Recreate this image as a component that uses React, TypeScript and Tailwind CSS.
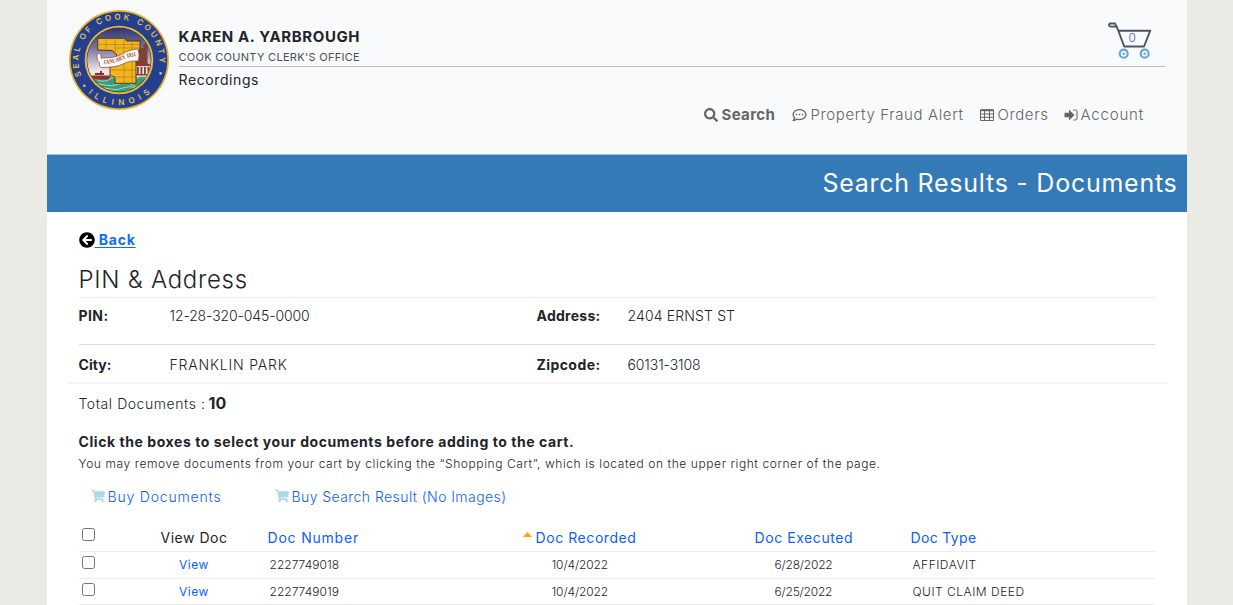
import { FaArrowCircleLeft, FaRegCommentDots, FaSearch, FaShoppingCart } from "react-icons/fa";

function Seal() {
  return (
    <svg viewBox="0 0 100 100" className="h-[100px] w-[100px] shrink-0">
      <defs>
        <linearGradient id="sky" x1="0" y1="0" x2="0" y2="1">
          <stop offset="0" stopColor="#2c3270" />
          <stop offset="0.4" stopColor="#77759f" />
          <stop offset="0.85" stopColor="#f3e6e4" />
        </linearGradient>
        <clipPath id="scene">
          <circle cx="50" cy="50" r="31.8" />
        </clipPath>
        <path id="arcTop" d="M19.9 77.1 A40.5 40.5 0 1 1 84.5 71.2" />
        <path id="arcBottom" d="M11.5 73.7 A45.2 45.2 0 0 0 88.5 73.7" />
        <path id="ribbon" d="M34.5 54.300C42 53.500 48 52.500 54 49.500C59 47 63 46.500 68.500 45.800" />
      </defs>
      <circle cx="50" cy="50" r="50" fill="#e9b526" />
      <circle cx="50" cy="50" r="48.3" fill="#233f8f" />
      <circle cx="50" cy="50" r="34.3" fill="#f0bb2b" />
      <circle cx="50" cy="50" r="32.4" fill="#273571" />
      <g clipPath="url(#scene)">
        <rect x="17" y="17" width="66" height="52" fill="url(#sky)" />
        <path d="M58 54V38h3v-5h4v2h2v-5h2v-3h1v3h1.500v8h3v-4h4v20z" fill="#7c4438" />
        <path d="M67 54.500l7-3.500 7 3.500v1.500H67zM68 57h1.800v7H68zM71.500 57h1.800v7h-1.800zM75 57h1.800v7H75zM78.500 57h1.800v7h-1.800zM67 64h15v1.500H67z" fill="#8b3c30" />
        <rect x="17" y="67" width="66" height="17" fill="#3f9b78" />
        <path d="M17 70q6-3 12 0t12-1 13 1 13-1 16 1M22 75q7-2 14 0t14-1 13 1 16-1M29 79q7-2 13 0t12-1 14 0" stroke="#a5d8b4" strokeWidth="1" fill="none" />
        <path d="M20 65.500h22l-3 4H22zM26 63h9v2h-9zM31 61h2v2h-2z" fill="#8f302b" />
      </g>
      <path
        d="M28.700 28.300H56l1.500 2.700H71v7.500L67 45v28.300H46V67l-5-1.500V52l7-7-5-4.500-14.300-.5z"
        fill="#f2b41f"
        stroke="#4e3c1c"
        strokeWidth="1"
      />
      <path d="M37 28.300V40M46 28.300V43M55 28.300V73M29 34.500h42M63 31v42M46 38h24M42 60h25M46 67h21" stroke="#a87718" strokeWidth="0.600" fill="none" />
      <path
        d="M28.300 44c3.500-1.500 4 1 3.700 4C42 48 48 47 54 43.500c5-3 9-3.800 14-4.500 2.500 1 2.500 9 1 12-6-.3-10 .5-15 3-6 3-13 3.300-20 3.500-3 .5-4-2.500-3.500-5-2 0-3-5-2.200-8.500z"
        fill="#fffaf0"
        stroke="#6e4544"
        strokeWidth="0.700"
      />
      <text className="font-['Liberation_Serif',serif] text-[6px] font-bold" fill="#963a33">
        <textPath href="#ribbon" textLength="34" lengthAdjust="spacingAndGlyphs">JANUARY 1831</textPath>
      </text>
      <text className="font-['Inter',sans-serif] text-[8px] font-semibold" fill="#edc04b">
        <textPath href="#arcTop" textLength="169" startOffset="2">• SEAL OF COOK COUNTY •</textPath>
      </text>
      <text className="font-['Inter',sans-serif] text-[8px] font-semibold" fill="#edc04b">
        <textPath href="#arcBottom" textLength="68" startOffset="12">ILLINOIS</textPath>
      </text>
    </svg>
  );
}

function Cart() {
  return (
    <svg viewBox="0 0 46 38" className="h-[38px] w-[46px]" fill="none">
      <path d="M9 4 11.300 9.700 17.200 25.500H37L43.300 9.700H11.300" stroke="#4a5664" strokeWidth="1.900" strokeLinejoin="round" />
      <path d="M3 2.500H8L9.300 5.700H4.300Q2 5.500 2 4Q2 2.500 3 2.500Z" stroke="#4a5664" strokeWidth="1.800" />
      <circle cx="16.700" cy="32.700" r="4" stroke="#64a9d8" strokeWidth="2.200" />
      <circle cx="37.700" cy="32.700" r="4" stroke="#64a9d8" strokeWidth="2.200" />
      <circle cx="16.700" cy="32.700" r="1.200" fill="#64a9d8" />
      <circle cx="37.700" cy="32.700" r="1.200" fill="#64a9d8" />
    </svg>
  );
}

function TableIcon() {
  return (
    <svg viewBox="0 0 14 12" className="h-3 w-3.5" fill="none" stroke="#666663">
      <path d="M0.500 1H13.500V11.500H0.500ZM4.500 1V11.500M9.500 1V11.500M0.500 5H13.500M0.500 8.300H13.500" />
      <path d="M0.500 1.200H13.500" strokeWidth="2" />
    </svg>
  );
}

function SignIn() {
  return (
    <svg viewBox="0 0 14 12" className="h-3 w-3.5">
      <path d="M0.500 3.700H5V0.500L10.500 6 5 11.500V8.300H0.500Z" fill="#666663" />
      <path d="M9 1H11.200Q13 1 13 2.800V9.200Q13 11 11.200 11H9" fill="none" stroke="#777" strokeWidth="1.200" />
    </svg>
  );
}

function Check() {
  return <input type="checkbox" className="block h-[13px] w-[13px]" />;
}

const rows = [
  { number: "2227749018", recorded: "10/4/2022", executed: "6/28/2022", type: "AFFIDAVIT" },
  { number: "2227749019", recorded: "10/4/2022", executed: "6/25/2022", type: "QUIT CLAIM DEED" },
];

export default function App() {
  return (
    <div className="h-[605px] overflow-hidden bg-[#ebebe6] pl-[46.5px] font-['Inter',sans-serif] text-[#212529]">
      <div className="h-[605px] w-[1140px] bg-white">
        <header className="h-[154px] bg-[#f8fafc] pl-[22px]">
          <div className="flex h-[100px] pt-[10px]">
            <Seal />
            <div className="ml-[10px] w-[986px]">
              <div className="flex h-[57px] justify-between border-b border-[#bcbdbf]">
                <div className="pt-[17px]">
                  <div className="h-5 text-[15px] leading-5 font-bold tracking-[0.6px]">KAREN A. YARBROUGH</div>
                  <div className="h-5 text-[11px] leading-5 tracking-[0.29px] text-[#4b5055]">COOK COUNTY CLERK'S OFFICE</div>
                </div>
                <div className="relative mt-[11px] mr-[12px] h-[38px] w-[46px]">
                  <Cart />
                  <span className="absolute top-[9px] left-[22px] text-[12px] leading-4 font-light text-[#5d48f5]">0</span>
                </div>
              </div>
              <div className="pt-[3px] text-[14px] leading-5 tracking-[0.6px]">Recordings</div>
            </div>
          </div>
          <nav className="flex h-[30px] items-center pl-[635px] text-[15px] font-light text-[#666663]">
            <div className="flex w-[88px] items-center font-bold tracking-[0.35px]">
              <FaSearch className="mr-1 h-3.5 w-3.5" />
              Search
            </div>
            <div className="flex w-[188px] items-center tracking-[0.62px]">
              <FaRegCommentDots className="mr-1 h-3.5 w-[15px]" />
              Property Fraud Alert
            </div>
            <div className="flex w-[84px] items-center tracking-[0.6px]">
              <span className="mr-1"><TableIcon /></span>
              Orders
            </div>
            <div className="flex items-center tracking-[0.8px]">
              <span className="mr-[3px]"><SignIn /></span>
              Account
            </div>
          </nav>
        </header>
        <div className="flex h-[58px] items-center justify-end border-t border-[#9fc0dc] bg-[#337ab7] pr-[9px] text-[25px] tracking-[0.74px] text-white">
          Search Results - Documents
        </div>

        <main className="px-8">
          <a href="#" className="mt-[18px] flex h-5 items-center text-[14px] font-bold tracking-[0.81px] text-[#0d6efd]">
            <FaArrowCircleLeft className="h-4 w-4 text-black" />
            <span className="relative -top-px whitespace-pre underline underline-offset-2"> Back</span>
          </a>
          <h1 className="mt-[14px] h-[34px] border-b border-[#ededed] text-[24px] leading-8 font-light tracking-[0.72px]">PIN &amp; Address</h1>
          <div className="grid h-[47px] w-[1076px] grid-cols-[91px_367px_91px_auto] border-b border-[#dcdddd] pt-[8px] text-[14px] leading-5">
            <b className="tracking-[0.41px]">PIN:</b>
            <span className="font-light tracking-[-0.11px]">12-28-320-045-0000</span>
            <b className="tracking-[0.27px]">Address:</b>
            <span className="font-light tracking-[0.14px]">2404 ERNST ST</span>
          </div>
          <div className="-mx-3 grid h-[39px] grid-cols-[91px_367px_91px_auto] border-b-2 border-[#f4f4f4] px-3 pt-[10px] text-[14px] leading-5">
            <b className="tracking-[0.06px]">City:</b>
            <span className="font-light tracking-[0.82px]">FRANKLIN PARK</span>
            <b className="tracking-[0.43px]">Zipcode:</b>
            <span className="font-light tracking-[-0.1px]">60131-3108</span>
          </div>
          <div className="mt-[9px] flex h-5 items-center text-[14px]">
            <span className="w-[130px] font-light tracking-[0.56px]">Total Documents :</span>
            <b className="text-[16px]">10</b>
          </div>
          <div className="mt-[19px] text-[14px] leading-5 font-bold tracking-[0.57px]">Click the boxes to select your documents before adding to the cart.</div>
          <div className="mt-[2px] text-[12px] leading-5 font-light tracking-[0.58px]">
            You may remove documents from your cart by clicking the “Shopping Cart”, which is located on the upper right corner of the page.
          </div>
          <div className="mt-[12px] flex h-5 items-center pl-3 text-[14px] font-light text-[#0d5efd]">
            <a href="#" className="flex w-[184px] items-center tracking-[0.82px]">
              <FaShoppingCart className="mr-[3px] h-3.5 w-3.5 text-[#add8e6]" />
              Buy Documents
            </a>
            <a href="#" className="flex items-center tracking-[0.43px]">
              <FaShoppingCart className="mr-[3px] h-3.5 w-3.5 text-[#add8e6]" />
              Buy Search Result (No Images)
            </a>
          </div>

          <div className="mt-[19px] w-[1076px]">
            <div className="grid h-[27px] grid-cols-[42px_147px_225px_190px_185px_auto] border-b border-[#ededed] text-[14px] leading-[26px] text-[#0d5efd]">
              <div className="pt-[3px] pl-[3.5px]"><Check /></div>
              <div className="text-center tracking-[0.52px] text-[#212529]">View Doc</div>
              <div className="tracking-[0.8px]">Doc Number</div>
              <div className="flex pl-[30px] tracking-[0.57px]">
                <svg viewBox="0 0 9 5" className="mt-[7px] mr-1 h-[5px] w-[9px]">
                  <path d="M0 5L4.500 0 9 5Z" fill="#ffa500" />
                </svg>
                Doc Recorded
              </div>
              <div className="pl-[72px] tracking-[0.57px]">Doc Executed</div>
              <div className="pl-[43px] tracking-[0.35px]">Doc Type</div>
            </div>
            {rows.map((row) => (
              <div
                key={row.number}
                className="grid h-[27px] grid-cols-[42px_147px_225px_190px_185px_auto] border-b border-[#ededed] text-[12px] leading-[26px] font-light last:h-[26px] last:leading-[25px]"
              >
                <div className="pt-[4px] pl-[3.5px]"><Check /></div>
                <a href="#" className="text-center font-normal tracking-[0.55px] text-[#0d5efd]">View</a>
                <div className="pl-0.5 tracking-[0.02px]">{row.number}</div>
                <div className="pl-[59px] tracking-[-0.12px]">{row.recorded}</div>
                <div className="pl-[92px] tracking-[-0.2px]">{row.executed}</div>
                <div className="pl-[45px] tracking-[0.5px]">{row.type}</div>
              </div>
            ))}
          </div>
        </main>
      </div>
    </div>
  );
}
